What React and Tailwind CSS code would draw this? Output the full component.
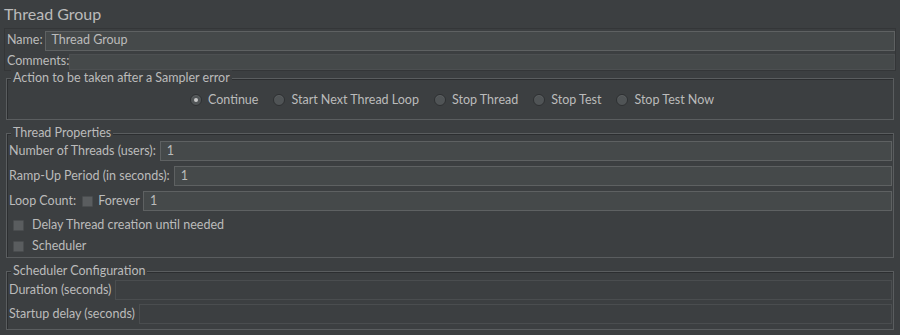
import React from 'react';

const Radio = ({ checked, label }) => (
  <label className="flex items-center gap-[6px]">
    <span className="w-[12px] h-[12px] rounded-full border border-[#2e3032] bg-[#505456] flex items-center justify-center shadow-[inset_0_1px_0_#5c6062]">
      {checked && <span className="w-[4px] h-[4px] rounded-full bg-[#c8c8c8]" />}
    </span>
    <span>{label}</span>
  </label>
);

const Check = () => (
  <span className="w-[11px] h-[11px] rounded-[1px] bg-[#5a5d5f] border border-[#4a4d4f] inline-block" />
);

const Field = ({ value, disabled }) => (
  <div
    className={`flex-1 h-[20px] flex items-center px-[6px] border ${
      disabled ? 'bg-[#3c3f41] border-[#4a4d4f]' : 'bg-[#45494a] border-[#5e6162]'
    }`}
  >
    {value}
  </div>
);

const Group = ({ title, children, className }) => (
  <div className={`relative mx-[6px] border border-[#5a5d5f] shadow-[inset_1px_1px_0_#2c2e30] ${className}`}>
    <span className="absolute left-[4px] top-[-9px] px-[2px] bg-[#3c3f41] leading-[16px]">{title}</span>
    {children}
  </div>
);

export default function App() {
  return (
    <div className="w-[900px] h-[335px] bg-[#3c3f41] text-[#bbbbbb] text-[12.5px] font-['Lato',sans-serif] overflow-hidden">
      <div className="h-[28px] pl-[4px] pt-[4px] text-[16px] leading-[20px]">Thread Group</div>

      <div className="mx-[4px] border border-[#343638] flex flex-col">
        <div className="flex items-center h-[23px] pl-[2px]">
          <span className="pr-[2px]">Name:</span>
          <Field value="Thread Group" />
        </div>
        <div className="flex items-center h-[17px] pl-[2px] mt-[1px]">
          <span>Comments:</span>
          <div className="flex-1 h-[16px] bg-[#45494a] border border-[#4c4f51]" />
        </div>
      </div>

      <Group title="Action to be taken after a Sampler error" className="mt-[7px] h-[42px]">
        <div className="flex justify-center items-center gap-[15px] pt-[12px] pl-[4px]">
          <Radio checked label="Continue" />
          <Radio label="Start Next Thread Loop" />
          <Radio label="Stop Thread" />
          <Radio label="Stop Test" />
          <Radio label="Stop Test Now" />
        </div>
      </Group>

      <Group title="Thread Properties" className="mt-[13px] h-[125px]">
        <div className="flex flex-col gap-[5px] pt-[7px] pl-[2px] pr-[1px]">
          <div className="flex items-center">
            <span className="pr-[4px]">Number of Threads (users):</span>
            <Field value="1" />
          </div>
          <div className="flex items-center">
            <span className="pr-[4px]">Ramp-Up Period (in seconds):</span>
            <Field value="1" />
          </div>
          <div className="flex items-center">
            <span className="pr-[6px]">Loop Count:</span>
            <Check />
            <span className="pl-[5px] pr-[3px]">Forever</span>
            <Field value="1" />
          </div>
          <div className="flex items-center gap-[8px] pl-[4px] h-[16px] mt-[1px]">
            <Check />
            <span>Delay Thread creation until needed</span>
          </div>
          <div className="flex items-center gap-[8px] pl-[4px] h-[16px]">
            <Check />
            <span>Scheduler</span>
          </div>
        </div>
      </Group>

      <Group title="Scheduler Configuration" className="mt-[13px] h-[59px]">
        <div className="flex flex-col gap-[4px] pt-[8px] pl-[2px] pr-[1px]">
          <div className="flex items-center">
            <span className="pr-[4px]">Duration (seconds)</span>
            <Field disabled />
          </div>
          <div className="flex items-center">
            <span className="pr-[4px]">Startup delay (seconds)</span>
            <Field disabled />
          </div>
        </div>
      </Group>
    </div>
  );
}
